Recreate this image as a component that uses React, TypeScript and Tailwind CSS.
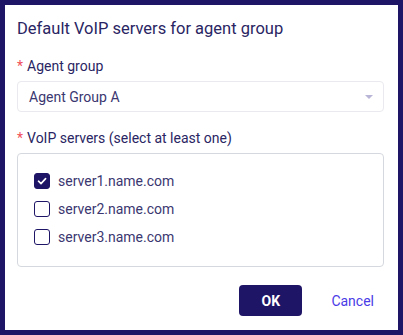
import React from 'react';

const servers = [
    { name: 'server1.name.com', checked: true },
    { name: 'server2.name.com', checked: false },
    { name: 'server3.name.com', checked: false },
];

const Checkbox = ({ checked }: { checked: boolean }) => (
    <span
        className={
            'w-4 h-4 rounded-[3px] border-[1.5px] border-[#1f1566] flex items-center justify-center shrink-0 ' +
            (checked ? 'bg-[#1f1566]' : 'bg-white')
        }
    >
        {checked && (
            <svg viewBox="0 0 12 12" className="w-3 h-3">
                <path d="M2.5 6.2 L5 8.6 L9.6 3.6" fill="none" stroke="white" strokeWidth="1.6" strokeLinecap="round" strokeLinejoin="round" />
            </svg>
        )}
    </span>
);

const App: React.FC = () => {
    return (
        <div className="w-[403px] h-[335px] bg-[#1f1566] p-[5px] font-['Roboto',sans-serif]">
            <div className="w-full h-full bg-white pl-3 pr-[14px] pt-[14px]">
                <h2 className="text-[16.5px] leading-5 text-[#2a2563]">Default VoIP servers for agent group</h2>

                {/* Agent group */}
                <div className="mt-[19px]">
                    <label className="text-sm leading-4 text-[#2a2563] block">
                        <span className="text-[#f0505a] mr-1">*</span>Agent group
                    </label>
                    <div className="mt-[7px] h-[31px] border border-[#e9e9ef] rounded-[4px] flex items-center justify-between pl-[11px] pr-[10px]">
                        <span className="text-sm text-[#3b3770]">Agent Group A</span>
                        <svg viewBox="0 0 8 4" className="w-2 h-1">
                            <path d="M0 0 L8 0 L4 4 Z" fill="#b8b5d6" />
                        </svg>
                    </div>
                </div>

                {/* VoIP servers */}
                <div className="mt-[18px]">
                    <label className="text-sm leading-4 text-[#2a2563] block">
                        <span className="text-[#f0505a] mr-1">*</span>VoIP servers (select at least one)
                    </label>
                    <div className="mt-[7px] h-[114px] border border-[#d6d8e0] rounded-[4px] pl-4 pt-[19px] flex flex-col gap-3">
                        {servers.map((s) => (
                            <div key={s.name} className="flex items-center gap-2 h-4">
                                <Checkbox checked={s.checked} />
                                <span className="text-sm text-[#3b3770]">{s.name}</span>
                            </div>
                        ))}
                    </div>
                </div>

                {/* Botões */}
                <div className="mt-[18px] flex items-center justify-end pr-[10px] gap-[29px]">
                    <button className="w-[63px] h-[31px] rounded-[4px] bg-[#1f1566] text-white text-sm font-bold">OK</button>
                    <button className="text-sm text-[#4a3ce6]">Cancel</button>
                </div>
            </div>
        </div>
    );
};

export default App;
